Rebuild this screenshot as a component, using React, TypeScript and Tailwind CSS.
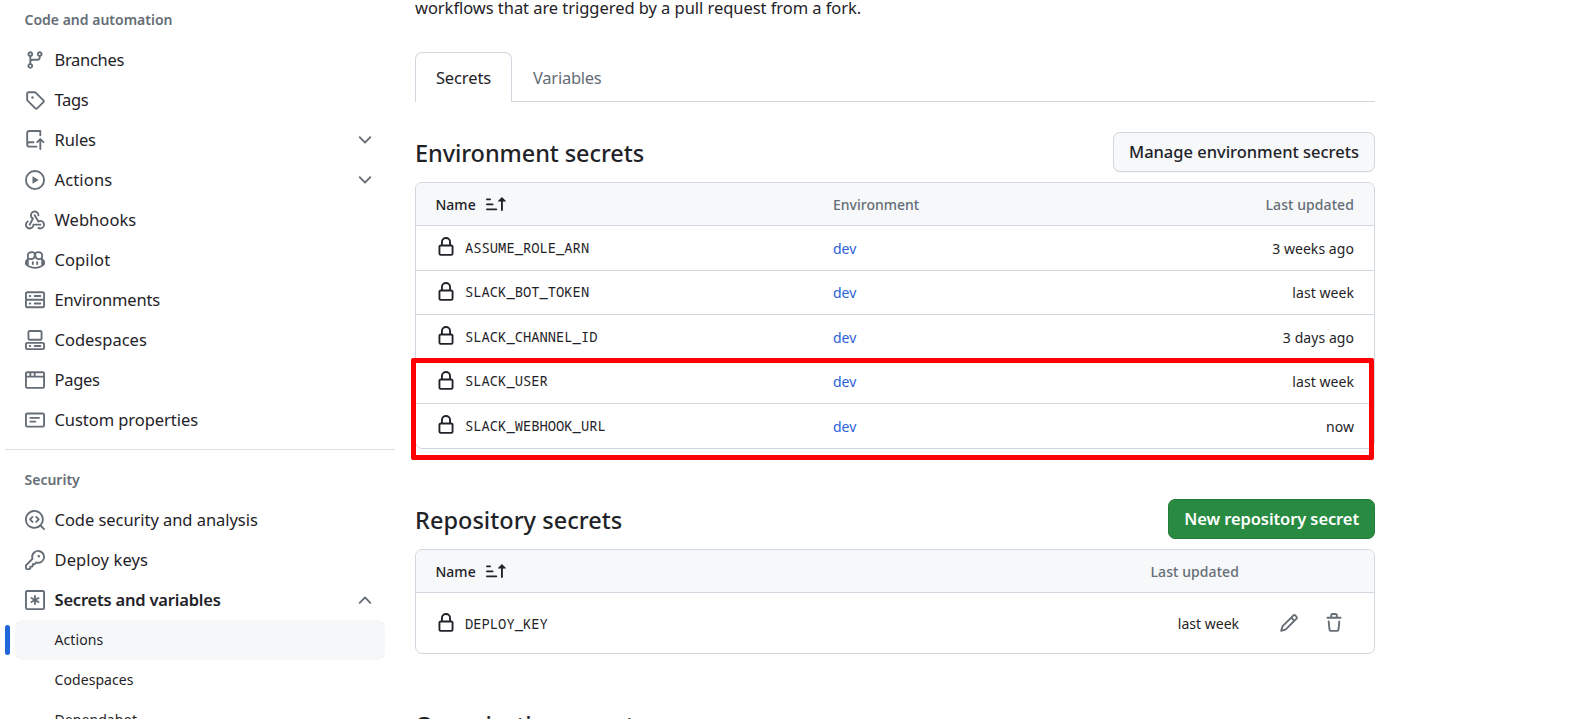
import type { ReactNode } from 'react';
import clsx from 'clsx';

const paths = {
  branch: [
    'M9.5 3.25a2.25 2.25 0 1 1 3 2.122V6A2.5 2.5 0 0 1 10 8.5H6a1 1 0 0 0-1 1v1.128a2.251 2.251 0 1 1-1.5 0V5.372a2.25 2.25 0 1 1 1.5 0v1.836A2.493 2.493 0 0 1 6 7h4a1 1 0 0 0 1-1v-.628A2.25 2.25 0 0 1 9.5 3.25Zm-6 0a.75.75 0 1 0 1.5 0 .75.75 0 0 0-1.5 0Zm8.25-.75a.75.75 0 1 0 0 1.5.75.75 0 0 0 0-1.5ZM4.25 12a.75.75 0 1 0 0 1.5.75.75 0 0 0 0-1.5Z',
  ],
  tag: [
    'M1 7.775V2.75C1 1.784 1.784 1 2.75 1h5.025c.464 0 .91.184 1.238.513l6.25 6.25a1.75 1.75 0 0 1 0 2.474l-5.026 5.026a1.75 1.75 0 0 1-2.474 0l-6.25-6.25A1.752 1.752 0 0 1 1 7.775Zm1.5 0c0 .066.026.13.073.177l6.25 6.25a.25.25 0 0 0 .354 0l5.025-5.025a.25.25 0 0 0 0-.354l-6.25-6.25a.25.25 0 0 0-.177-.073H2.75a.25.25 0 0 0-.25.25ZM6 5a1 1 0 1 1 0 2 1 1 0 0 1 0-2Z',
  ],
  repoPush: [
    'M1 2.5A2.5 2.5 0 0 1 3.5 0h8.75a.75.75 0 0 1 .75.75v3.5a.75.75 0 0 1-1.5 0V1.5h-8a1 1 0 0 0-1 1v6.708A2.493 2.493 0 0 1 3.5 9h3.25a.75.75 0 0 1 0 1.5H3.5a1 1 0 0 0 0 2h5.75a.75.75 0 0 1 0 1.5H3.5A2.5 2.5 0 0 1 1 11.5Zm13.23 7.79h-.001l-1.224-1.224v6.184a.75.75 0 0 1-1.5 0V9.066L10.28 10.29a.75.75 0 0 1-1.06-1.061l2.505-2.504a.75.75 0 0 1 1.06 0L15.29 9.23a.751.751 0 0 1-.018 1.042.751.751 0 0 1-1.042.018Z',
  ],
  play: [
    'M8 0a8 8 0 1 1 0 16A8 8 0 0 1 8 0ZM1.5 8a6.5 6.5 0 1 0 13 0 6.5 6.5 0 0 0-13 0Zm4.879-2.773 4.264 2.559a.25.25 0 0 1 0 .428l-4.264 2.559A.25.25 0 0 1 6 10.559V5.442a.25.25 0 0 1 .379-.215Z',
  ],
  webhook: [
    'M5.5 4.25a2.25 2.25 0 0 1 4.5 0 .75.75 0 0 0 1.5 0 3.75 3.75 0 1 0-6.14 2.889l-2.272 4.258a.75.75 0 0 0 1.324.706L7 7.25a.75.75 0 0 0-.309-1.015A2.25 2.25 0 0 1 5.5 4.25Z',
    'M7.364 3.607a.75.75 0 0 1 1.03.257l2.608 4.349a3.75 3.75 0 1 1-.628 6.785.75.75 0 0 1 .752-1.299 2.25 2.25 0 1 0-.033-3.88.75.75 0 0 1-1.03-.256L7.107 4.636a.75.75 0 0 1 .257-1.03Z',
    'M2.9 8.776A.75.75 0 0 1 2.625 9.8 2.25 2.25 0 1 0 6 11.75a.75.75 0 0 1 .75-.751h5.5a.75.75 0 0 1 0 1.5H7.425a3.751 3.751 0 1 1-5.55-3.998.75.75 0 0 1 1.024.274Z',
  ],
  copilot: [
    'M7.998 15.035c-4.562 0-7.873-2.914-7.998-3.749V9.338c.085-.628.677-1.686 1.588-2.065.013-.07.024-.143.036-.218.029-.183.06-.384.126-.612-.201-.508-.254-1.084-.254-1.656 0-.87.128-1.769.693-2.484.579-.733 1.494-1.124 2.724-1.261 1.206-.134 2.262.034 2.944.765.05.053.096.108.139.165.044-.057.094-.112.143-.165.682-.731 1.738-.899 2.944-.765 1.23.137 2.145.528 2.724 1.261.566.715.693 1.614.693 2.484 0 .572-.053 1.148-.254 1.656.066.228.098.429.126.612.012.076.024.148.037.218.924.385 1.522 1.471 1.591 2.095v1.872c0 .766-3.351 3.795-8.002 3.795Zm0-1.485c2.28 0 4.584-1.11 5.002-1.433V7.862l-.023-.116c-.49.21-1.075.291-1.727.291-1.146 0-2.059-.327-2.71-.991A3.222 3.222 0 0 1 8 6.303a3.24 3.24 0 0 1-.544.743c-.65.664-1.563.991-2.71.991-.652 0-1.236-.081-1.727-.291l-.023.116v4.255c.419.323 2.722 1.433 5.002 1.433ZM6.762 2.83c-.193-.206-.637-.413-1.682-.297-1.019.113-1.479.404-1.713.7-.247.312-.369.789-.369 1.554 0 .793.129 1.171.308 1.371.162.181.519.379 1.442.379.853 0 1.339-.235 1.638-.54.315-.322.527-.827.617-1.553.117-.935-.037-1.395-.241-1.614Zm4.155-.297c-1.044-.116-1.488.091-1.681.297-.204.219-.359.679-.242 1.614.091.726.303 1.231.618 1.553.299.305.784.54 1.638.54.922 0 1.28-.198 1.442-.379.179-.2.308-.578.308-1.371 0-.765-.123-1.242-.37-1.554-.233-.296-.693-.587-1.713-.7Z',
    'M6.25 9.037a.75.75 0 0 1 .75.75v1.501a.75.75 0 0 1-1.5 0V9.787a.75.75 0 0 1 .75-.75Zm4.25.75v1.501a.75.75 0 0 1-1.5 0V9.787a.75.75 0 0 1 1.5 0Z',
  ],
  server: [
    'M1.75 1h12.5c.966 0 1.75.784 1.75 1.75v4c0 .372-.116.717-.314 1 .198.283.314.628.314 1v4a1.75 1.75 0 0 1-1.75 1.75H1.75A1.75 1.75 0 0 1 0 12.75v-4c0-.358.109-.707.314-1a1.739 1.739 0 0 1-.314-1v-4C0 1.784.784 1 1.75 1ZM1.5 2.75v4c0 .138.112.25.25.25h12.5a.25.25 0 0 0 .25-.25v-4a.25.25 0 0 0-.25-.25H1.75a.25.25 0 0 0-.25.25Zm.25 5.75a.25.25 0 0 0-.25.25v4c0 .138.112.25.25.25h12.5a.25.25 0 0 0 .25-.25v-4a.25.25 0 0 0-.25-.25ZM7 4.75A.75.75 0 0 1 7.75 4h4.5a.75.75 0 0 1 0 1.5h-4.5A.75.75 0 0 1 7 4.75ZM7.75 10h4.5a.75.75 0 0 1 0 1.5h-4.5a.75.75 0 0 1 0-1.5ZM3 4.75A.75.75 0 0 1 3.75 4h.5a.75.75 0 0 1 0 1.5h-.5A.75.75 0 0 1 3 4.75ZM3.75 10h.5a.75.75 0 0 1 0 1.5h-.5a.75.75 0 0 1 0-1.5Z',
  ],
  codespaces: [
    'M0 11.25c0-.966.784-1.75 1.75-1.75h12.5c.966 0 1.75.784 1.75 1.75v3A1.75 1.75 0 0 1 14.25 16H1.75A1.75 1.75 0 0 1 0 14.25Zm2-9.5C2 .784 2.784 0 3.75 0h8.5C13.216 0 14 .784 14 1.75v5a1.75 1.75 0 0 1-1.75 1.75h-8.5A1.75 1.75 0 0 1 2 6.75Zm1.75-.25a.25.25 0 0 0-.25.25v5c0 .138.112.25.25.25h8.5a.25.25 0 0 0 .25-.25v-5a.25.25 0 0 0-.25-.25Zm-2 9.5a.25.25 0 0 0-.25.25v3c0 .138.112.25.25.25h12.5a.25.25 0 0 0 .25-.25v-3a.25.25 0 0 0-.25-.25Z',
    'M7 12.75a.75.75 0 0 1 .75-.75h4.5a.75.75 0 0 1 0 1.5h-4.5a.75.75 0 0 1-.75-.75Zm-4 0a.75.75 0 0 1 .75-.75h.5a.75.75 0 0 1 0 1.5h-.5a.75.75 0 0 1-.75-.75Z',
  ],
  browser: [
    'M0 2.75C0 1.784.784 1 1.75 1h12.5c.966 0 1.75.784 1.75 1.75v10.5A1.75 1.75 0 0 1 14.25 15H1.75A1.75 1.75 0 0 1 0 13.25ZM14.5 6h-13v7.25c0 .138.112.25.25.25h12.5a.25.25 0 0 0 .25-.25Zm-6-3.5v2h6V2.75a.25.25 0 0 0-.25-.25ZM5 2.5v2h2v-2Zm-3.25 0a.25.25 0 0 0-.25.25V4.5h2v-2Z',
  ],
  note: [
    'M0 3.75C0 2.784.784 2 1.75 2h12.5c.966 0 1.75.784 1.75 1.75v8.5A1.75 1.75 0 0 1 14.25 14H1.75A1.75 1.75 0 0 1 0 12.25Zm1.75-.25a.25.25 0 0 0-.25.25v8.5c0 .138.112.25.25.25h12.5a.25.25 0 0 0 .25-.25v-8.5a.25.25 0 0 0-.25-.25ZM3.5 6.25a.75.75 0 0 1 .75-.75h7a.75.75 0 0 1 0 1.5h-7a.75.75 0 0 1-.75-.75Zm.75 2.25h4a.75.75 0 0 1 0 1.5h-4a.75.75 0 0 1 0-1.5Z',
  ],
  codescan: [
    'M8.47 4.97a.75.75 0 0 0 0 1.06L9.94 7.5 8.47 8.97a.75.75 0 1 0 1.06 1.06l2-2a.75.75 0 0 0 0-1.06l-2-2a.75.75 0 0 0-1.06 0ZM6.53 6.03a.75.75 0 0 0-1.06-1.06l-2 2a.75.75 0 0 0 0 1.06l2 2a.75.75 0 1 0 1.06-1.06L5.06 7.5l1.47-1.47Z',
    'M12.246 13.307a7.501 7.501 0 1 1 1.06-1.06l2.474 2.473a.749.749 0 1 1-1.06 1.06l-2.474-2.473ZM1.5 7.5a6.002 6.002 0 0 0 3.608 5.504 6.002 6.002 0 0 0 6.486-1.117.748.748 0 0 1 .292-.293A6 6 0 1 0 1.5 7.5Z',
  ],
  key: [
    'M10.5 0a5.499 5.499 0 1 1-1.288 10.848l-.932.932a.749.749 0 0 1-.53.22H7v.75a.749.749 0 0 1-.22.53l-.5.5a.749.749 0 0 1-.53.22H5v.75a.749.749 0 0 1-.22.53l-.5.5a.749.749 0 0 1-.53.22h-2A1.75 1.75 0 0 1 0 14.25v-2c0-.199.079-.389.22-.53l4.932-4.932A5.5 5.5 0 0 1 10.5 0Zm-4 5.5c-.001.431.069.86.205 1.269a.75.75 0 0 1-.181.768L1.5 12.56v1.69c0 .138.112.25.25.25h1.69l.06-.06v-1.19a.75.75 0 0 1 .75-.75h1.19l.06-.06v-1.19a.75.75 0 0 1 .75-.75h1.19l1.023-1.025a.75.75 0 0 1 .768-.18A4 4 0 1 0 6.5 5.5ZM11 6a1 1 0 1 1 0-2 1 1 0 0 1 0 2Z',
  ],
  asterisk: [
    'M0 1.75C0 .784.784 0 1.75 0h12.5C15.216 0 16 .784 16 1.75v12.5A1.75 1.75 0 0 1 14.25 16H1.75A1.75 1.75 0 0 1 0 14.25Zm1.75-.25a.25.25 0 0 0-.25.25v12.5c0 .138.112.25.25.25h12.5a.25.25 0 0 0 .25-.25V1.75a.25.25 0 0 0-.25-.25Z',
    'M8 4a.75.75 0 0 1 .75.75V6.7l1.69-.975a.75.75 0 0 1 .75 1.3L9.5 8l1.69.976a.75.75 0 0 1-.75 1.298L8.75 9.3v1.951a.75.75 0 0 1-1.5 0V9.299l-1.69.976a.75.75 0 0 1-.75-1.3L6.5 8l-1.69-.975a.75.75 0 0 1 .75-1.3l1.69.976V4.75A.75.75 0 0 1 8 4Z',
  ],
  chevron: [
    'M12.78 5.22a.749.749 0 0 1 0 1.06l-4.25 4.25a.749.749 0 0 1-1.06 0L3.22 6.28a.749.749 0 1 1 1.06-1.06L8 8.939l3.72-3.719a.749.749 0 0 1 1.06 0Z',
  ],
  lock: [
    'M4 4a4 4 0 0 1 8 0v2h.25c.966 0 1.75.784 1.75 1.75v5.5A1.75 1.75 0 0 1 12.25 15h-8.5A1.75 1.75 0 0 1 2 13.25v-5.5C2 6.784 2.784 6 3.75 6H4Zm8.25 3.5h-8.5a.25.25 0 0 0-.25.25v5.5c0 .138.112.25.25.25h8.5a.25.25 0 0 0 .25-.25v-5.5a.25.25 0 0 0-.25-.25ZM10.5 6V4a2.5 2.5 0 1 0-5 0v2Z',
  ],
  pencil: [
    'M11.013 1.427a1.75 1.75 0 0 1 2.474 0l1.086 1.086a1.75 1.75 0 0 1 0 2.474l-8.61 8.61c-.21.21-.47.364-.756.445l-3.251.93a.75.75 0 0 1-.927-.928l.929-3.25c.081-.286.235-.547.445-.758l8.61-8.61Zm.176 4.823L9.75 4.81l-6.286 6.287a.253.253 0 0 0-.064.108l-.558 1.953 1.953-.558a.253.253 0 0 0 .108-.064Zm1.238-3.763a.25.25 0 0 0-.354 0L10.811 3.75l1.439 1.44 1.263-1.263a.25.25 0 0 0 0-.354Z',
  ],
  trash: [
    'M11 1.75V3h2.25a.75.75 0 0 1 0 1.5H2.75a.75.75 0 0 1 0-1.5H5V1.75C5 .784 5.784 0 6.75 0h2.5C10.216 0 11 .784 11 1.75ZM4.496 6.675l.66 6.6a.25.25 0 0 0 .249.225h5.19a.25.25 0 0 0 .249-.225l.66-6.6a.75.75 0 0 1 1.492.149l-.66 6.6A1.748 1.748 0 0 1 10.595 15h-5.19a1.75 1.75 0 0 1-1.741-1.575l-.66-6.6a.75.75 0 1 1 1.492-.15ZM6.5 1.75V3h3V1.75a.25.25 0 0 0-.25-.25h-2.5a.25.25 0 0 0-.25.25Z',
  ],
  sortAsc: [
    'm12.927 2.573 3 3A.25.25 0 0 1 15.75 6H13.5v6.75a.75.75 0 0 1-1.5 0V6H9.75a.25.25 0 0 1-.177-.427l3-3a.25.25 0 0 1 .354 0ZM0 12.25a.75.75 0 0 1 .75-.75h7.5a.75.75 0 0 1 0 1.5H.75a.75.75 0 0 1-.75-.75Zm0-4a.75.75 0 0 1 .75-.75h4.5a.75.75 0 0 1 0 1.5H.75a.75.75 0 0 1-.75-.75Zm0-4a.75.75 0 0 1 .75-.75h2.5a.75.75 0 0 1 0 1.5H.75A.75.75 0 0 1 0 4.25Z',
  ],
};

type IconName = keyof typeof paths;

function Icon({ name, className }: { name: IconName; className?: string }) {
  return (
    <svg viewBox="0 0 16 16" fill="currentColor" className={clsx('size-5 shrink-0', className)} aria-hidden>
      {paths[name].map((d) => (
        <path key={d} d={d} />
      ))}
    </svg>
  );
}

type NavEntry = { icon: IconName; label: string; tracking?: string; chevron?: 'up' | 'down'; active?: boolean };

const automation: NavEntry[] = [
  { icon: 'branch', label: 'Branches', tracking: 'tracking-[-0.3px]' },
  { icon: 'tag', label: 'Tags', tracking: 'tracking-[-0.3px]' },
  { icon: 'repoPush', label: 'Rules', tracking: 'tracking-[-0.1px]', chevron: 'down' },
  { icon: 'play', label: 'Actions', tracking: 'tracking-[0.15px]', chevron: 'down' },
  { icon: 'webhook', label: 'Webhooks', tracking: 'tracking-[0.05px]' },
  { icon: 'copilot', label: 'Copilot', tracking: 'tracking-[0.1px]' },
  { icon: 'server', label: 'Environments', tracking: 'tracking-[-0.16px]' },
  { icon: 'codespaces', label: 'Codespaces', tracking: 'tracking-[0px]' },
  { icon: 'browser', label: 'Pages', tracking: 'tracking-[-0.3px]' },
  { icon: 'note', label: 'Custom properties', tracking: 'tracking-[-0.06px]' },
];

const security: NavEntry[] = [
  { icon: 'codescan', label: 'Code security and analysis', tracking: 'tracking-[-0.05px]' },
  { icon: 'key', label: 'Deploy keys', tracking: 'tracking-[0.12px]' },
  { icon: 'asterisk', label: 'Secrets and variables', tracking: 'tracking-[-0.2px]', chevron: 'up', active: true },
];

function NavRow({ icon, label, tracking, chevron, active }: NavEntry) {
  return (
    <li className="flex h-10 items-center pr-5 pl-[25px]">
      <Icon name={icon} className="text-[#656d76]" />
      <span className={clsx('ml-[9.5px] flex-1 text-[16.5px]', tracking, active && 'font-semibold')}>{label}</span>
      {chevron && <Icon name="chevron" className={clsx('text-[#656d76]', chevron === 'up' && 'rotate-180')} />}
    </li>
  );
}

function NavHeading({ children }: { children: ReactNode }) {
  return <h3 className="flex h-10 items-center pb-0.5 pl-[24.5px] text-[14px] font-semibold text-[#656d76]">{children}</h3>;
}

function Sidebar() {
  return (
    <nav className="w-[395px] shrink-0">
      <NavHeading>Code and automation</NavHeading>
      <ul>
        {automation.map((e) => (
          <NavRow key={e.label} {...e} />
        ))}
      </ul>
      <div className="mt-[9px] mb-2.5 ml-[5px] h-px bg-[#dcdfe3]" />
      <NavHeading>Security</NavHeading>
      <ul>
        {security.map((e) => (
          <NavRow key={e.label} {...e} />
        ))}
      </ul>
      <ul className="text-[14px] tracking-[0.08px]">
        <li className="flex items-center pl-[5px]">
          <span className="h-[30px] w-[5px] rounded-md bg-[#2067d9]" />
          <span className="ml-[5px] flex h-10 w-[370px] items-center rounded-[7px] bg-[#f6f7f9] pb-0.5 pl-[39.5px]">Actions</span>
        </li>
        <li className="flex h-10 items-center pb-0.5 pl-[54.5px]">Codespaces</li>
        <li className="flex h-10 items-center pb-0.5 pl-[54.5px]">Dependabot</li>
      </ul>
    </nav>
  );
}

function NameHeader() {
  return (
    <span className="-ml-[0.5px] flex flex-1 items-center text-[14px] font-medium text-[#1f2328]">
      Name
      <Icon name="sortAsc" className="ml-2.5" />
    </span>
  );
}

const secrets = [
  { name: 'ASSUME_ROLE_ARN', updated: '3 weeks ago', height: 'h-[45px]' },
  { name: 'SLACK_BOT_TOKEN', updated: 'last week', height: 'h-11' },
  { name: 'SLACK_CHANNEL_ID', updated: '3 days ago', height: 'h-[45px]' },
  { name: 'SLACK_USER', updated: 'last week', height: 'h-11' },
  { name: 'SLACK_WEBHOOK_URL', updated: 'now', height: 'h-[44px]' },
];

function SecretName({ children }: { children: ReactNode }) {
  return (
    <>
      <Icon name="lock" className="mr-[9px]" />
      <span className="pt-0.5 font-['Noto_Sans_Mono','DejaVu_Sans_Mono',monospace] text-[13.8px]">{children}</span>
    </>
  );
}

function EnvironmentSecrets() {
  return (
    <section className="relative mt-[30px]">
      <header className="flex h-10 items-center justify-between">
        <h2 className="pt-[3px] text-[23.5px] font-medium tracking-[-0.08px]">Environment secrets</h2>
        <button className="h-10 rounded-[7px] border border-[#d0d7de] bg-[#f6f8fa] px-[15px] pt-px text-[16.5px] font-medium tracking-[-0.02px] shadow-[0_1px_0_rgba(31,35,40,0.04)]">
          Manage environment secrets
        </button>
      </header>
      <div className="mt-2.5 overflow-hidden rounded-[7px] border border-[#d0d7de]">
        <div className="flex h-[43px] items-center border-b border-[#d0d7de] bg-[#f6f8fa] px-5 text-[14px] font-medium text-[#656d76]">
          <NameHeader />
          <span className="w-[321px]">Environment</span>
          <span className="w-[200px] text-right tracking-[0.08px]">Last updated</span>
        </div>
        {secrets.map((s) => (
          <div key={s.name} className={clsx('flex items-center border-b border-[#d0d7de] px-5 text-[14px] last:border-b-0', s.height)}>
            <span className="flex flex-1 items-center pb-0.5">
              <SecretName>{s.name}</SecretName>
            </span>
            <a className="w-[321px] text-[#2a62d6]">dev</a>
            <span className="w-[200px] text-right tracking-[0.06px]">{s.updated}</span>
          </div>
        ))}
      </div>
      <div className="absolute top-[226px] -left-1 h-[102px] w-[963px] rounded-[2px] border-[5px] border-[#ff0000]" />
    </section>
  );
}

function RepositorySecrets() {
  return (
    <section className="mt-[50px]">
      <header className="flex h-10 items-center justify-between">
        <h2 className="pt-[3px] text-[23.5px] font-medium tracking-[0.03px]">Repository secrets</h2>
        <button className="h-10 rounded-[7px] border border-[#237b39] bg-[#298b42] px-[15px] pt-px text-[16.5px] font-semibold tracking-[-0.1px] text-white">
          New repository secret
        </button>
      </header>
      <div className="mt-2.5 overflow-hidden rounded-[7px] border border-[#d0d7de]">
        <div className="flex h-[43px] items-center border-b border-[#d0d7de] bg-[#f6f8fa] px-5 text-[14px] font-medium text-[#656d76]">
          <NameHeader />
          <span className="mr-[115px] tracking-[0.08px]">Last updated</span>
        </div>
        <div className="flex h-[60px] items-center px-5 text-[14px]">
          <span className="flex flex-1 items-center">
            <SecretName>DEPLOY_KEY</SecretName>
          </span>
          <span>last week</span>
          <Icon name="pencil" className="ml-10 text-[#656d76]" />
          <Icon name="trash" className="mr-2.5 ml-[25px] text-[#656d76]" />
        </div>
      </div>
    </section>
  );
}

export default function App() {
  return (
    <div className="flex h-[719px] w-[1573px] overflow-hidden bg-white font-['Noto_Sans','Open_Sans',sans-serif] text-[#1f2328]">
      <Sidebar />
      <main className="ml-5 w-[960px] shrink-0">
        <p className="-mt-[5px] h-[25px] text-[16.5px] leading-[26px] tracking-[-0.05px] whitespace-nowrap">
          workflows that are triggered by a pull request from a fork.
        </p>
        <div className="mt-8 flex h-[50px] text-[16.5px]">
          <span className="flex w-[97px] items-center justify-center rounded-t-[7px] border border-b-0 border-[#d0d7de] pt-px tracking-[-0.1px]">
            Secrets
          </span>
          <span className="flex flex-1 items-center border-b border-[#d0d7de] pt-[3px] pl-[21px] tracking-[-0.25px] text-[#656d76]">Variables</span>
        </div>
        <EnvironmentSecrets />
        <RepositorySecrets />
        <h2 className="mt-[54px] text-[23.5px] font-medium tracking-[-0.08px]">Organization secrets</h2>
      </main>
    </div>
  );
}
